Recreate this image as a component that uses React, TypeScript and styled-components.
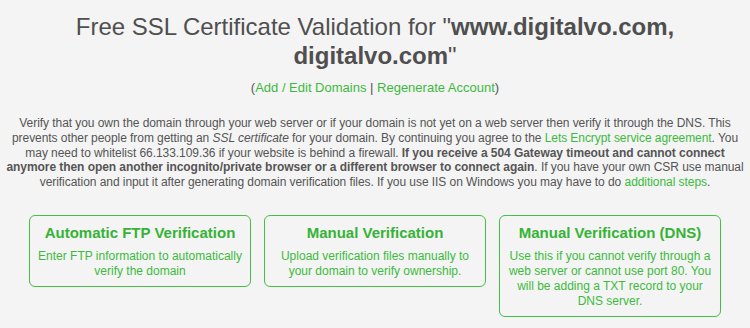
import React from 'react';
import styled, { createGlobalStyle } from 'styled-components';

const GlobalStyle = createGlobalStyle`
  html, body {
    margin: 0;
    padding: 0;
    background-color: #f4f4f4;
  }
  body {
    font-family: "Liberation Sans", Arial, sans-serif;
    color: #555;
  }
`;

const Page = styled.div`
  width: 750px;
  height: 328px;
  overflow: hidden;
  box-sizing: border-box;
  padding: 10px 3px 0;
  text-align: center;
`;

const Title = styled.h1`
  font-size: 24px;
  font-weight: normal;
  line-height: 29px;
  color: #4f4f4f;
  margin: 2px 60px 0;

  b {
    font-weight: bold;
  }
`;

const Links = styled.p`
  font-size: 13px;
  line-height: 16px;
  margin: 10px 0 0;
  color: #555;
`;

const Link = styled.a`
  color: #3dba3d;
  text-decoration: none;
`;

const Intro = styled.p`
  font-size: 12px;
  letter-spacing: -0.06px;
  line-height: 14.75px;
  margin: 20px 0 0;
  color: #555;
`;

const Options = styled.div`
  display: flex;
  justify-content: center;
  align-items: flex-start;
  gap: 13px;
  margin-top: 25px;
`;

const Option = styled.div`
  width: 222px;
  box-sizing: border-box;
  border: 1px solid #45bf45;
  border-radius: 6px;
  padding: 7px 8px 7px;
  color: #3dba3d;
`;

const OptionTitle = styled.h3`
  font-size: 15px;
  font-weight: bold;
  line-height: 20px;
  margin: 0 0 6px;
  color: #36b336;
`;

const OptionText = styled.p`
  font-size: 12px;
  line-height: 15px;
  margin: 0;
`;

const options = [
  {
    title: 'Automatic FTP Verification',
    text: 'Enter FTP information to automatically verify the domain',
  },
  {
    title: 'Manual Verification',
    text: 'Upload verification files manually to your domain to verify ownership.',
  },
  {
    title: 'Manual Verification (DNS)',
    text: 'Use this if you cannot verify through a web server or cannot use port 80. You will be adding a TXT record to your DNS server.',
  },
];

export default function App() {
  return (
    <Page>
      <GlobalStyle />
      <Title>
        Free SSL Certificate Validation for "<b>www.digitalvo.com, digitalvo.com</b>"
      </Title>
      <Links>
        (<Link href="#">Add / Edit Domains</Link> | <Link href="#">Regenerate Account</Link>)
      </Links>
      <Intro>
        Verify that you own the domain through your web server or if your domain is not yet on a web
        server then verify it through the DNS. This prevents other people from getting an{' '}
        <i>SSL certificate</i> for your domain. By continuing you agree to the{' '}
        <Link href="#">Lets Encrypt service agreement</Link>. You may need to whitelist 66.133.109.36
        if your website is behind a firewall.{' '}
        <b>
          If you receive a 504 Gateway timeout and cannot connect anymore then open another
          incognito/private browser or a different browser to connect again
        </b>
        . If you have your own CSR use manual verification and input it after generating domain
        verification files. If you use IIS on Windows you may have to do{' '}
        <Link href="#">additional steps</Link>.
      </Intro>
      <Options>
        {options.map((o) => (
          <Option key={o.title}>
            <OptionTitle>{o.title}</OptionTitle>
            <OptionText>{o.text}</OptionText>
          </Option>
        ))}
      </Options>
    </Page>
  );
}
